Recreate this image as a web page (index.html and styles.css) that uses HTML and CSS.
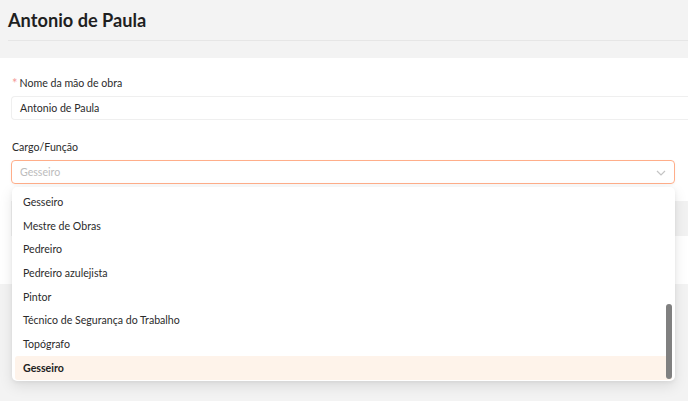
FILE: index.html
```html
<!DOCTYPE html>
<html lang="pt">
<head>
<meta charset="utf-8">
<title>Antonio de Paula</title>
<link rel="stylesheet" href="styles.css">
</head>
<body>
<header class="page-header">
  <h1 class="page-title">Antonio de Paula</h1>
</header>
<main class="card">
  <div class="field">
    <label class="label"><span class="req">*</span>Nome da mão de obra</label>
    <div class="input">Antonio de Paula</div>
  </div>
  <div class="field field-select">
    <label class="label">Cargo/Função</label>
    <div class="select">
      <span class="placeholder">Gesseiro</span>
      <svg class="chevron" width="10" height="6" viewBox="0 0 10 6"><path d="M1 1 L5 5 L9 1" fill="none" stroke="#c4c4c4" stroke-width="1.2"/></svg>
    </div>
    <div class="dropdown">
      <ul class="options">
        <li class="option">Gesseiro</li>
        <li class="option">Mestre de Obras</li>
        <li class="option">Pedreiro</li>
        <li class="option">Pedreiro azulejista</li>
        <li class="option">Pintor</li>
        <li class="option">Técnico de Segurança do Trabalho</li>
        <li class="option">Topógrafo</li>
        <li class="option selected">Gesseiro</li>
      </ul>
      <div class="scroll-thumb"></div>
    </div>
  </div>
  <div class="hidden-field"></div>
</main>
</body>
</html>
```

FILE: styles.css
```css
html, body {
  margin: 0;
  padding: 0;
}
body {
  background: #f3f3f3;
  font-family: "Lato", "Open Sans", sans-serif;
  color: #2b2b2b;
  width: 688px;
  height: 401px;
  overflow: hidden;
}
.page-header {
  margin-left: 8px;
  height: 41px;
  border-bottom: 1px solid #e6e6e6;
  box-sizing: border-box;
  display: flex;
  align-items: center;
}
.page-title {
  margin: 0 0 1px 0;
  font-size: 18.2px;
  font-weight: 700;
  color: #1f1f1f;
}
.card {
  margin-top: 17px;
  background: #fff;
  padding: 15px 0 0 11px;
  height: 226px;
  box-sizing: border-box;
}
.field {
  display: flex;
  flex-direction: column;
}
.label {
  font-size: 10.6px;
  line-height: 18px;
  height: 18px;
  margin: 0 0 5px 1px;
  color: #2b2b2b;
  padding-top: 1px;
  box-sizing: border-box;
}
.req {
  color: #f59a9a;
  font-size: 13px;
  line-height: 10px;
  margin-right: 2px;
  vertical-align: -1px;
}
.input {
  height: 24px;
  border: 1px solid #efefef;
  border-right: none;
  border-radius: 4px 0 0 4px;
  box-sizing: border-box;
  font-size: 10.6px;
  line-height: 23px;
  padding-left: 8px;
  color: #2b2b2b;
}
.field-select {
  margin-top: 17px;
  position: relative;
}
.select {
  width: 664px;
  height: 24px;
  border: 1px solid #ffae8a;
  border-radius: 4px;
  box-sizing: border-box;
  display: flex;
  align-items: center;
  justify-content: space-between;
  padding: 0 8px 0 8px;
  box-shadow: 0 1px 3px rgba(0,0,0,0.04);
}
.placeholder {
  font-size: 10.6px;
  color: #bcbcbc;
}
.chevron {
  margin-top: 1px;
}
.hidden-field {
  margin-top: 17px;
  height: 35px;
  background: #f2f2f2;
}
.dropdown {
  position: absolute;
  left: 1px;
  top: 50px;
  width: 663px;
  height: 194px;
  background: #fff;
  border-radius: 5px;
  box-shadow: 0 5px 14px rgba(0,0,0,0.10), 0 1px 4px rgba(0,0,0,0.06);
  box-sizing: border-box;
  padding: 3px 3px;
  z-index: 10;
}
.options {
  list-style: none;
  margin: 0;
  padding: 0;
}
.option {
  height: 23.7px;
  line-height: 24.7px;
  padding-left: 8px;
  font-size: 10.6px;
  color: #2b2b2b;
  border-radius: 3px;
}
.option.selected {
  background: #fef3ea;
  font-weight: 700;
  color: #222;
}
.scroll-thumb {
  position: absolute;
  right: 3px;
  bottom: 2px;
  width: 6px;
  height: 75px;
  border-radius: 3px;
  background: #808080;
}
```
